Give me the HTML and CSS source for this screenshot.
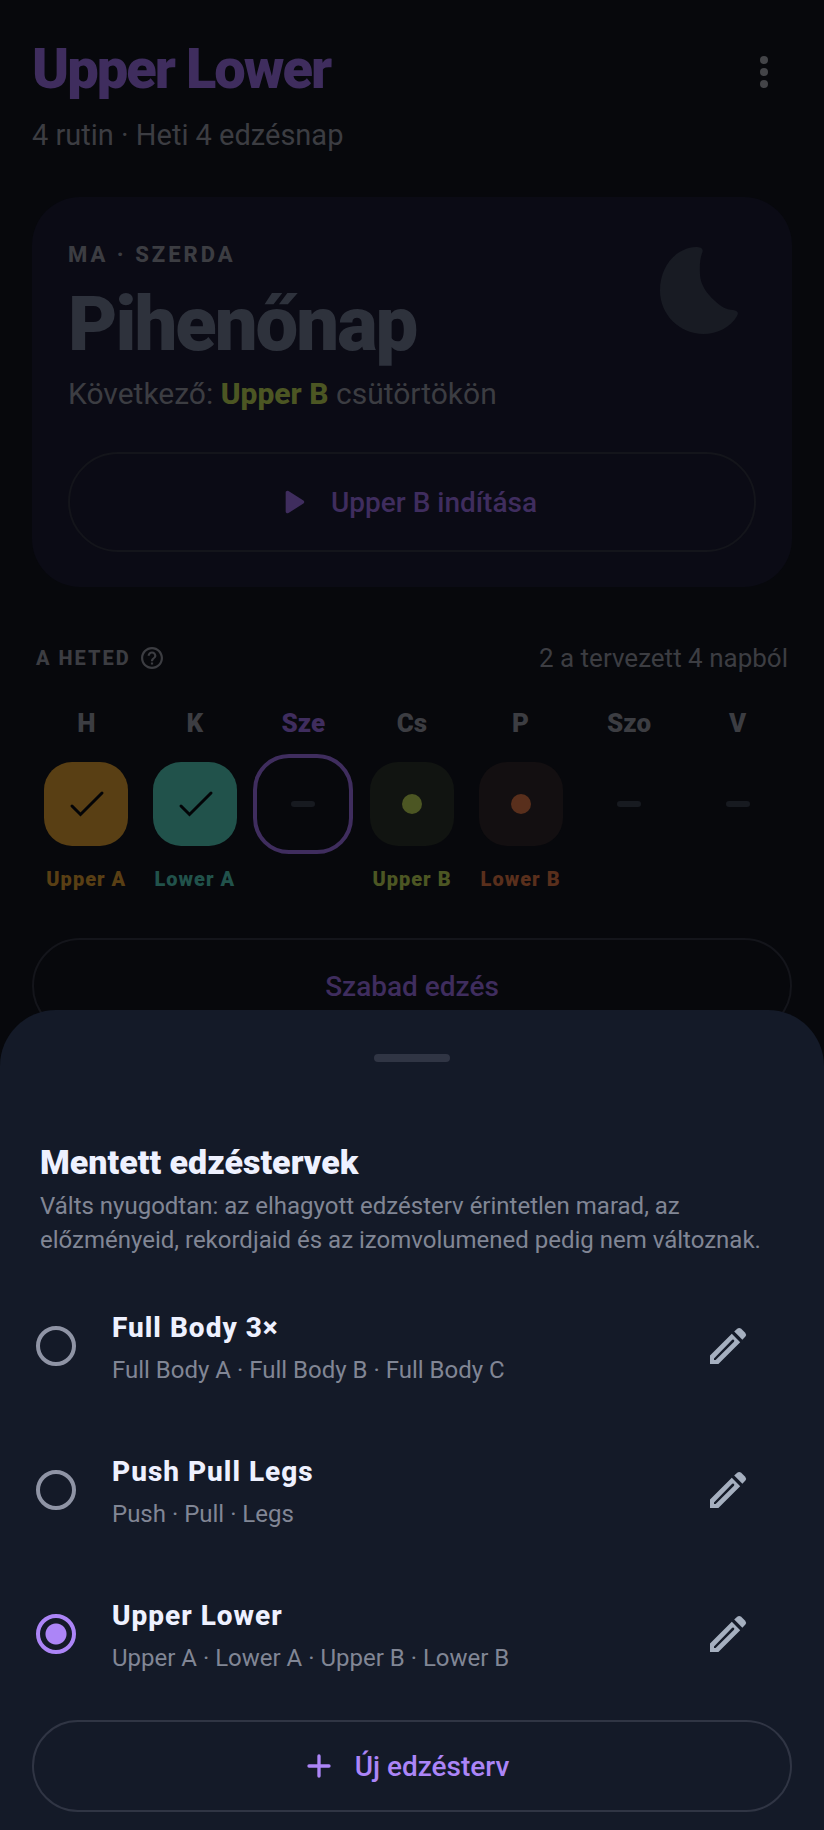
FILE: index.html
```html
<!DOCTYPE html>
<html lang="hu">
<head>
  <meta charset="UTF-8">
  <meta name="viewport" content="width=device-width, initial-scale=1">
  <title>Upper Lower</title>
  <link rel="stylesheet" href="styles.css">
</head>
<body>
  <main class="page">
    <header class="header">
      <div>
        <h1>Upper Lower</h1>
        <p class="subtitle">4 rutin · Heti 4 edzésnap</p>
      </div>
      <button class="icon-btn" type="button" aria-label="Menü">
        <svg viewBox="0 0 24 24"><circle cx="12" cy="6" r="2"/><circle cx="12" cy="12" r="2"/><circle cx="12" cy="18" r="2"/></svg>
      </button>
    </header>

    <!-- Today -->
    <section class="today">
      <svg class="moon" viewBox="0 0 78 87"><path d="M36 0C15 1 0 20 0 43.500C0 67.500 19.500 87 43.500 87C57 87 71 80 77 69C79 65 77.500 64 73 63C66 62.500 61 60 55 54C46 46 40.500 37 40 28C39.500 18 40 11 42.500 5C43.500 1 40 0 36 0z"/></svg>
      <p class="eyebrow">MA · SZERDA</p>
      <h2>Pihenőnap</h2>
      <p class="next">Következő: <strong>Upper B</strong> csütörtökön</p>
      <button class="pill with-icon start" type="button">
        <svg class="play" viewBox="0 0 24 24"><path d="M8 6.820v10.360c0 .790.870 1.270 1.540.840l8.140-5.180c.620-.390.620-1.290 0-1.690L9.540 5.980C8.870 5.550 8 6.030 8 6.820z"/></svg>
        Upper B indítása
      </button>
    </section>

    <!-- Week -->
    <section class="week">
      <div class="week-head">
        <h3>A HETED</h3>
        <button class="help" type="button" aria-label="Súgó">
          <svg viewBox="2 2 20 20"><path d="M11 18h2v-2h-2v2zm1-16C6.480 2 2 6.480 2 12s4.480 10 10 10 10-4.480 10-10S17.520 2 12 2zm0 18c-4.410 0-8-3.590-8-8s3.590-8 8-8 8 3.590 8 8-3.590 8-8 8zm0-14c-2.210 0-4 1.790-4 4h2c0-1.100.900-2 2-2s2 .900 2 2c0 2-3 1.750-3 5h2c0-2.250 3-2.500 3-5 0-2.210-1.790-4-4-4z"/></svg>
        </button>
        <span class="count">2 a tervezett 4 napból</span>
      </div>
      <div class="days">
        <div class="day upper-a">
          <span class="name">H</span>
          <span class="slot"><span class="tile done"><svg viewBox="0 0 48 48"><path d="M10 26l8.500 8.500L40 13"/></svg></span></span>
          <span class="routine">Upper A</span>
        </div>
        <div class="day lower-a">
          <span class="name">K</span>
          <span class="slot"><span class="tile done"><svg viewBox="0 0 48 48"><path d="M10 26l8.500 8.500L40 13"/></svg></span></span>
          <span class="routine">Lower A</span>
        </div>
        <div class="day current">
          <span class="name">Sze</span>
          <span class="slot"><span class="dash"></span></span>
        </div>
        <div class="day upper-b">
          <span class="name">Cs</span>
          <span class="slot"><span class="tile"><span class="dot"></span></span></span>
          <span class="routine">Upper B</span>
        </div>
        <div class="day lower-b">
          <span class="name">P</span>
          <span class="slot"><span class="tile"><span class="dot"></span></span></span>
          <span class="routine">Lower B</span>
        </div>
        <div class="day">
          <span class="name">Szo</span>
          <span class="slot"><span class="dash"></span></span>
        </div>
        <div class="day">
          <span class="name">V</span>
          <span class="slot"><span class="dash"></span></span>
        </div>
      </div>
    </section>

    <button class="pill free" type="button">Szabad edzés</button>
  </main>

  <!-- Bottom sheet -->
  <section class="sheet" role="dialog" aria-labelledby="sheetTitle">
    <div class="handle"></div>
    <div class="sheet-head">
      <h2 id="sheetTitle">Mentett edzéstervek</h2>
      <p>Válts nyugodtan: az elhagyott edzésterv érintetlen marad, az előzményeid, rekordjaid és az izomvolumened pedig nem változnak.</p>
    </div>
    <ul class="plans">
      <li class="plan">
        <input type="radio" name="plan" id="fullBody">
        <label for="fullBody"><strong>Full Body 3×</strong><span>Full Body A · Full Body B · Full Body C</span></label>
        <button class="icon-btn" type="button" aria-label="Full Body 3× szerkesztése">
          <svg viewBox="0 0 24 24"><path fill-rule="evenodd" d="M3 16.800L13.900 5.900l4.200 4.200L7.200 21H3zM5 18.200V19h.800l9.200-9.100q.300-.500 0-.900t-.900-.100z"/><path d="M15.100 4.800l1.500-1.400q1-.900 2 0l2 2q.900 1 0 2l-1.400 1.500z"/></svg>
        </button>
      </li>
      <li class="plan">
        <input type="radio" name="plan" id="pushPull">
        <label for="pushPull"><strong>Push Pull Legs</strong><span>Push · Pull · Legs</span></label>
        <button class="icon-btn" type="button" aria-label="Push Pull Legs szerkesztése">
          <svg viewBox="0 0 24 24"><path fill-rule="evenodd" d="M3 16.800L13.900 5.900l4.200 4.200L7.200 21H3zM5 18.200V19h.800l9.200-9.100q.300-.500 0-.900t-.900-.100z"/><path d="M15.100 4.800l1.500-1.400q1-.900 2 0l2 2q.900 1 0 2l-1.400 1.500z"/></svg>
        </button>
      </li>
      <li class="plan">
        <input type="radio" name="plan" id="upperLower" checked>
        <label for="upperLower"><strong>Upper Lower</strong><span>Upper A · Lower A · Upper B · Lower B</span></label>
        <button class="icon-btn" type="button" aria-label="Upper Lower szerkesztése">
          <svg viewBox="0 0 24 24"><path fill-rule="evenodd" d="M3 16.800L13.900 5.900l4.200 4.200L7.200 21H3zM5 18.200V19h.800l9.200-9.100q.300-.500 0-.900t-.900-.100z"/><path d="M15.100 4.800l1.500-1.400q1-.900 2 0l2 2q.900 1 0 2l-1.400 1.500z"/></svg>
        </button>
      </li>
    </ul>
    <button class="pill with-icon new-plan" type="button">
      <svg class="plus" viewBox="0 0 24 24"><path d="M12 6v12M6 12h12"/></svg>
      Új edzésterv
    </button>
  </section>
</body>
</html>
```
FILE: styles.css
```css
* {
  box-sizing: border-box;
}

body {
  margin: 0;
  background-color: #07080c;
  color: #3c3d42;
  font-family: Roboto, "Liberation Sans", sans-serif;
  font-size: 28px;
}

h1, h2, h3, p, ul {
  margin: 0;
  padding: 0;
}

button {
  font: inherit;
  color: inherit;
  background: none;
  border: none;
  padding: 0;
  cursor: pointer;
}

svg {
  display: block;
  fill: currentColor;
}

.page {
  padding: 36px 32px 0;
}

.header {
  display: flex;
  justify-content: space-between;
  align-items: flex-start;
}

h1 {
  font-size: 56px;
  line-height: 66px;
  font-weight: 900;
  letter-spacing: -2px;
  color: #3f2d5e;
}

.subtitle {
  margin-top: 13px;
  font-size: 29px;
  line-height: 40px;
}

.icon-btn {
  width: 48px;
  height: 48px;
}

.header .icon-btn {
  margin: 12px 4px 0 0;
  color: #434448;
}

/* Today card */
.today {
  position: relative;
  margin-top: 42px;
  padding: 40px 36px 35px;
  border-radius: 48px;
  background-color: #0b0b15;
}

.moon {
  position: absolute;
  top: 50px;
  right: 54px;
  width: 78px;
  color: #181b23;
}

.eyebrow {
  font-size: 22px;
  line-height: 36px;
  font-weight: 800;
  letter-spacing: 3px;
}

.today h2 {
  margin-top: 7px;
  font-size: 76px;
  line-height: 88px;
  font-weight: 900;
  letter-spacing: -2px;
  color: #2e323c;
}

.next {
  margin-top: 6px;
  font-size: 30px;
  line-height: 40px;
}

.next strong {
  font-weight: 800;
  color: #4c5623;
}

.pill {
  display: flex;
  justify-content: center;
  align-items: center;
  width: 100%;
  height: 96px;
  border: 2px solid #14151b;
  border-radius: 50px;
  color: #3f2d5e;
  font-weight: 500;
}

.with-icon {
  gap: 16px;
  padding: 0 48px 0 32px;
}

.start {
  height: 100px;
  margin-top: 38px;
}

.play {
  width: 44px;
}

/* Week */
.week {
  margin-top: 53px;
}

.week-head {
  display: flex;
  align-items: center;
  padding: 0 4px;
  line-height: 36px;
}

h3 {
  font-size: 20px;
  font-weight: 800;
  letter-spacing: 2px;
}

.help {
  width: 22px;
  margin-left: 10px;
}

.count {
  margin-left: auto;
  font-size: 26px;
}

.days {
  display: grid;
  grid-template-columns: repeat(7, 1fr);
  margin-top: 28px;
}

.day {
  display: flex;
  flex-direction: column;
  align-items: center;
}

.name {
  font-size: 26px;
  line-height: 38px;
  font-weight: 900;
}

.slot {
  display: flex;
  justify-content: center;
  align-items: center;
  width: 100px;
  height: 100px;
  margin-top: 12px;
  border-radius: 36px;
}

.tile {
  display: flex;
  justify-content: center;
  align-items: center;
  width: 84px;
  height: 84px;
  border-radius: 28px;
}

.tile svg {
  width: 48px;
  fill: none;
  stroke: #030407;
  stroke-width: 3;
  stroke-linecap: round;
}

.dot {
  width: 20px;
  height: 20px;
  border-radius: 50%;
  background-color: currentColor;
}

.dash {
  width: 24px;
  height: 6px;
  border-radius: 3px;
  background-color: #171a20;
}

.routine {
  margin-top: 10px;
  font-size: 20px;
  line-height: 30px;
  font-weight: 900;
  letter-spacing: 1px;
  white-space: nowrap;
}

.done {
  background-color: currentColor;
}

.upper-a .tile, .upper-a .routine {
  color: #593f14;
}

.lower-a .tile, .lower-a .routine {
  color: #21524b;
}

.upper-b .tile, .upper-b .routine {
  color: #4c5623;
}

.upper-b .tile {
  background-color: #111411;
}

.lower-b .tile, .lower-b .routine {
  color: #592f1c;
}

.lower-b .tile {
  background-color: #130f11;
}

.current .name {
  color: #3f2d5e;
}

.current .slot {
  border: 4px solid #3f2d5e;
}

.free {
  margin-top: 44px;
}

/* Bottom sheet */
.sheet {
  position: fixed;
  left: 0;
  right: 0;
  bottom: 0;
  padding: 44px 32px 18px;
  border-radius: 56px 56px 0 0;
  background-color: #141a28;
  color: #818695;
}

.handle {
  width: 76px;
  height: 8px;
  margin: 0 auto;
  border-radius: 4px;
  background-color: #303544;
}

.sheet-head {
  padding: 80px 8px 17px;
}

.sheet-head h2 {
  font-size: 34px;
  line-height: 40px;
  font-weight: 900;
  color: #eef1ff;
}

.sheet-head p {
  margin-top: 7px;
  font-size: 24px;
  line-height: 34px;
}

.plans {
  list-style: none;
}

.plan {
  display: flex;
  align-items: center;
  height: 144px;
  padding: 0 40px 0 4px;
}

.plan input {
  appearance: none;
  width: 40px;
  height: 40px;
  margin: 0 36px 0 0;
  border: 4px solid #8f94a5;
  border-radius: 50%;
}

.plan input:checked {
  border-color: #ac85f7;
  background: radial-gradient(circle, #ac85f7 10px, transparent 11px);
}

.plan label {
  display: flex;
  flex: 1;
  flex-direction: column;
  gap: 5px;
  padding-top: 3px;
  font-size: 24px;
  line-height: 34px;
}

.plan strong {
  font-size: 28px;
  line-height: 40px;
  font-weight: 800;
  letter-spacing: 1px;
  color: #eef1ff;
}

.plan .icon-btn {
  color: #a5afbf;
}

.plus {
  width: 40px;
  stroke: currentColor;
  stroke-width: 2;
  stroke-linecap: round;
}

.new-plan {
  height: 92px;
  margin-top: 14px;
  border-color: #303544;
  color: #ac85f7;
}
```
